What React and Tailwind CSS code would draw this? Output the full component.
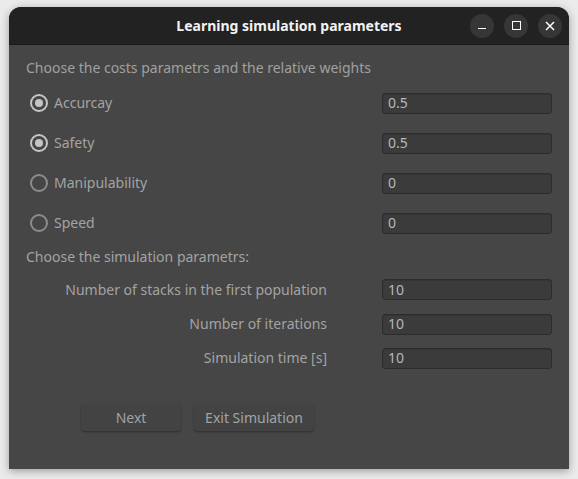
import React from "react";

function Radio({ checked, label }) {
  return (
    <div className="flex items-center h-[40px] pl-[4px]">
      <div
        className={
          "w-[18px] h-[18px] rounded-full border-2 flex items-center justify-center " +
          (checked ? "border-[#c4c4c4]" : "border-[#8c8c8c]")
        }
      >
        {checked && <div className="w-[8px] h-[8px] rounded-full bg-[#c4c4c4]" />}
      </div>
      <span className="ml-[6px] text-[#a3a3a3] -mt-[1px]">{label}</span>
    </div>
  );
}

function Field({ value }) {
  return (
    <div className="w-[170px] h-[21px] rounded-[3px] border border-[#2c2c2c] bg-[#3b3b3b] flex items-center pl-[5px] text-[#b3b8bd] shadow-[inset_0_1px_0_#353535]">
      <span className="-mt-[1px]">{value}</span>
    </div>
  );
}

function CostRow({ checked, label, value }) {
  return (
    <div className="flex items-center justify-between h-[40px] pr-[17px]">
      <Radio checked={checked} label={label} />
      <Field value={value} />
    </div>
  );
}

function SimRow({ label, value, h }) {
  return (
    <div className={"flex items-center " + h}>
      <div className="w-[301px] text-right text-[#a3a3a3] -mt-[1px]">{label}</div>
      <div className="ml-[55px]">
        <Field value={value} />
      </div>
    </div>
  );
}

function TitleBtn({ children }) {
  return (
    <div className="w-[24px] h-[24px] rounded-full bg-[#363636] flex items-center justify-center">
      {children}
    </div>
  );
}

export default function App() {
  return (
    <div
      className="w-[578px] h-[479px] bg-[#ebebeb] pt-[7px] pl-[9px]"
      style={{ fontFamily: '"Noto Sans", "DejaVu Sans", sans-serif' }}
    >
      <div className="w-[560px] h-[462px] rounded-t-[12px] overflow-hidden shadow-[0_2px_8px_rgba(0,0,0,0.35)] flex flex-col bg-[#464646]">
        <div className="h-[38px] bg-[#222222] border-b border-[#1a1a1a] flex items-center relative shrink-0">
          <div className="absolute inset-0 flex items-center justify-center text-[14px] font-bold text-[#f2f2f2]">
            Learning simulation parameters
          </div>
          <div className="ml-auto mr-[7px] flex gap-[10px] relative">
            <TitleBtn>
              <div className="w-[8px] h-[1.5px] bg-white mt-[6px]" />
            </TitleBtn>
            <TitleBtn>
              <div className="w-[9px] h-[9px] border-[1.5px] border-white" />
            </TitleBtn>
            <TitleBtn>
              <svg width="10" height="10" viewBox="0 0 10 10">
                <path d="M1 1L9 9M9 1L1 9" stroke="white" strokeWidth="1.5" />
              </svg>
            </TitleBtn>
          </div>
        </div>
        <div className="pl-[17px] pt-[13px] text-[14px]">
          <div className="h-[20px] leading-[20px] text-[#a0a0a0]">
            Choose the costs parametrs and the relative weights
          </div>
          <div className="mt-[5px]">
            <CostRow checked label="Accurcay" value="0.5" />
            <CostRow checked label="Safety" value="0.5" />
            <CostRow label="Manipulability" value="0" />
            <CostRow label="Speed" value="0" />
          </div>
          <div className="mt-[4px] h-[20px] leading-[20px] text-[#a3a3a3]">
            Choose the simulation parametrs:
          </div>
          <div className="mt-[5px]">
            <SimRow label="Number of stacks in the first population" value="10" h="h-[35px]" />
            <SimRow label="Number of iterations" value="10" h="h-[34px]" />
            <SimRow label="Simulation time [s]" value="10" h="h-[34px]" />
          </div>
          <div className="mt-[29px] ml-[55px] flex gap-[13px]">
            <div className="w-[100px] h-[27px] rounded-[4px] bg-[#434343] shadow-[0_1px_2px_rgba(0,0,0,0.35)] flex items-center justify-center text-[#9fa3a7]">
              <span className="-mt-[1px]">Next</span>
            </div>
            <div className="w-[120px] h-[27px] rounded-[4px] bg-[#434343] shadow-[0_1px_2px_rgba(0,0,0,0.35)] flex items-center justify-center text-[#9fa3a7]">
              <span className="-mt-[1px]">Exit Simulation</span>
            </div>
          </div>
        </div>
      </div>
    </div>
  );
}
